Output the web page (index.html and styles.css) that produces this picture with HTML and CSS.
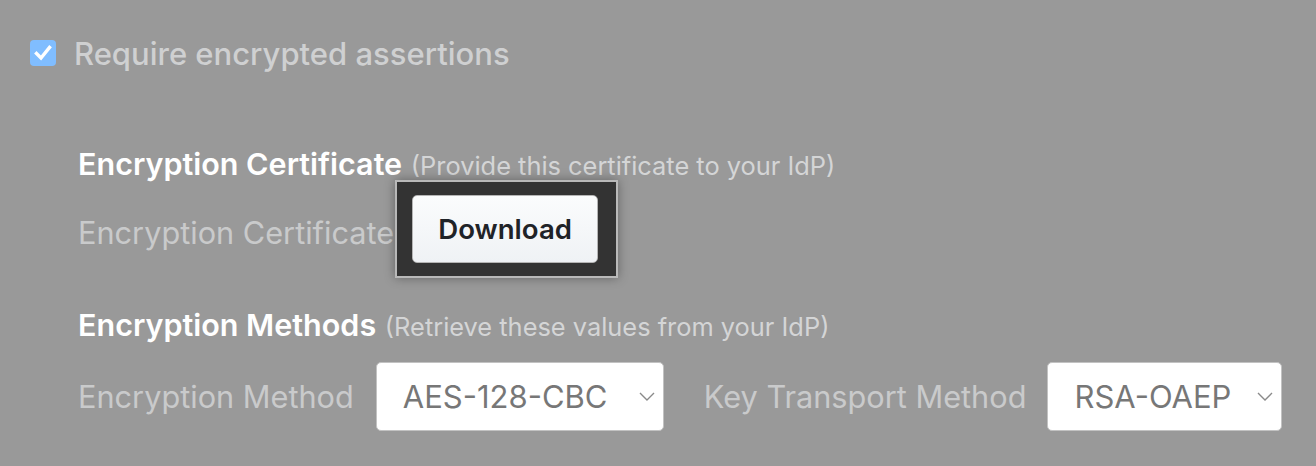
FILE: index.html
```html
<!DOCTYPE html>
<html lang="en">
<head>
<meta charset="utf-8">
<title>Encryption settings</title>
<link rel="stylesheet" href="styles.css">
</head>
<body>
<div class="page">
  <label class="check-row">
    <span class="checkbox">
      <svg viewBox="0 0 26 26" width="26" height="26" aria-hidden="true">
        <path d="M6.5 13.5 L11 18 L19.5 7.5" fill="none" stroke="#ffffff" stroke-width="3.4" stroke-linecap="square" stroke-linejoin="miter"/>
      </svg>
    </span>
    <span class="check-label">Require encrypted assertions</span>
  </label>

  <section class="section section-cert">
    <h2 class="heading">Encryption Certificate <span class="hint">(Provide this certificate to your IdP)</span></h2>
    <div class="field-row">
      <span class="field-label">Encryption Certificate</span>
      <div class="spotlight">
        <button class="btn" type="button">Download</button>
      </div>
    </div>
  </section>

  <section class="section section-methods">
    <h2 class="heading">Encryption Methods <span class="hint">(Retrieve these values from your IdP)</span></h2>
    <div class="field-row methods-row">
      <span class="field-label">Encryption Method</span>
      <div class="select select-enc">
        <span class="select-value">AES-128-CBC</span>
        <svg class="chevron" viewBox="0 0 16 9" width="16" height="9" aria-hidden="true"><path d="M1 1 L8 8 L15 1" fill="none" stroke="#8a8a8a" stroke-width="1.4"/></svg>
      </div>
      <span class="field-label key-label">Key Transport Method</span>
      <div class="select select-key">
        <span class="select-value">RSA-OAEP</span>
        <svg class="chevron" viewBox="0 0 16 9" width="16" height="9" aria-hidden="true"><path d="M1 1 L8 8 L15 1" fill="none" stroke="#8a8a8a" stroke-width="1.4"/></svg>
      </div>
    </div>
  </section>
</div>
</body>
</html>
```
FILE: styles.css
```css
html, body {
  margin: 0;
  padding: 0;
}
body {
  background: #999999;
  font-family: Inter, Roboto, "Liberation Sans", Arial, sans-serif;
  width: 1316px;
  height: 466px;
  overflow: hidden;
}
.page {
  padding: 40px 0 0 30px;
}
.check-row {
  display: flex;
  align-items: center;
  gap: 18px;
  height: 26px;
}
.checkbox {
  width: 26px;
  height: 26px;
  border-radius: 4px;
  background: #80bdff;
  display: block;
  flex: none;
}
.checkbox svg {
  display: block;
}
.check-label {
  font-size: 31px;
  font-weight: 500;
  color: #cfd0d1;
}
.section {
  padding-left: 48px;
}
.section-cert {
  margin-top: 80px;
}
.heading {
  margin: 0;
  font-size: 30.5px;
  font-weight: 600;
  color: #ffffff;
  line-height: 36px;
}
.hint {
  font-size: 25.4px;
  font-weight: 400;
  color: #d4d5d6;
  margin-left: 1px;
}
.field-row {
  display: flex;
  align-items: center;
}
.section-cert .field-row {
  margin-top: 2px;
}
.field-label {
  font-size: 30.7px;
  font-weight: 400;
  color: #c9cacb;
}
.spotlight {
  margin-left: 1px;
  margin-top: -6px;
  padding: 13px 18px 13px 15px;
  background: #333333;
  border: 2px solid #b9b9b9;
  box-shadow: 0 0 10px rgba(0, 0, 0, 0.35);
}
.btn {
  display: block;
  width: 186px;
  height: 68px;
  border: 1px solid #b5b5b5;
  border-radius: 5px;
  background: linear-gradient(#fbfcfd, #eff2f5);
  font-family: inherit;
  font-size: 27.6px;
  font-weight: 600;
  color: #1f2328;
  padding: 0;
}
.section-methods {
  margin-top: 29px;
}
.methods-row {
  margin-top: 17px;
}
.select {
  display: flex;
  align-items: center;
  justify-content: space-between;
  height: 69px;
  box-sizing: border-box;
  background: #ffffff;
  border: 1px solid #c2c2c2;
  border-radius: 5px;
  padding: 0 8px 0 26px;
}
.select-value {
  font-size: 31px;
  color: #777777;
}
.select-enc {
  width: 288px;
  margin-left: 22px;
}
.select-key {
  width: 235px;
  margin-left: 21px;
}
.key-label {
  margin-left: 40px;
}
.chevron {
  display: block;
}
```
